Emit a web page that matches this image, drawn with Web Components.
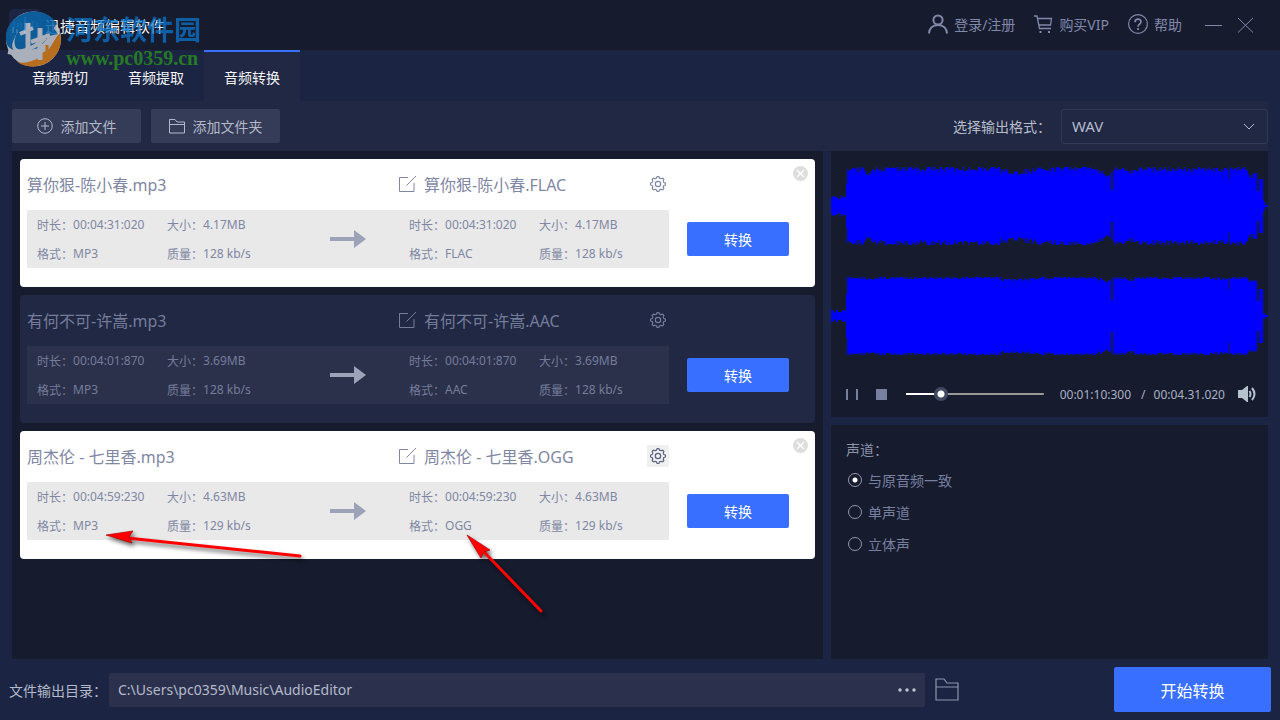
<!DOCTYPE html>
<html lang="zh-CN">
<head>
<meta charset="utf-8">
<meta name="viewport" content="width=device-width, initial-scale=1">
<title>迅捷音频编辑软件</title>
<style>
  html { background: #1b2442; }
  body { margin: 0; font-family: "Noto Sans", "Noto Sans CJK SC", sans-serif; font-size: 14px; color: #b4bacb; }
</style>
</head>
<body>
<audio-app></audio-app>
<script>
const BASE = `
  *, *::before, *::after { box-sizing: border-box; }
  button, input, select { font: inherit; color: inherit; margin: 0; }
  button { background: none; border: 0; padding: 0; cursor: pointer; display: inline-flex; align-items: center; justify-content: center; }
  svg { display: block; flex: none; }
  a { color: inherit; text-decoration: none; }
`;
function define(name, render, setup) {
  customElements.define(name, class extends HTMLElement {
    constructor() { super(); this.attachShadow({ mode: "open" }); }
    connectedCallback() {
      const t = document.createElement("template");
      t.innerHTML = `<style>${BASE}</style>` + render(this);
      this.shadowRoot.replaceChildren(t.content.cloneNode(true));
      if (setup) setup(this);
    }
  });
}

define("title-bar", () => `
  <style>
    :host { display: flex; align-items: center; height: 50px; padding: 0 26px 0 9px; background: #161b2e; color: #8189ab; white-space: nowrap; }
    h1 { margin: 0 auto 0 4px; font-size: 15px; font-weight: 400; color: #f4f5f8; }
    a { display: flex; align-items: center; gap: 6px; margin-right: 19px; height: 48px; margin-bottom: 2px; }
    .min { margin: 0 15px 0 4px; }
  </style>
  <svg width="32" height="32" viewBox="0 0 32 32"><rect width="32" height="32" rx="5" fill="#1c2644"/><path d="M5 12v7M9 14v4M12 13v6M20 13v6M24 12v7M28 14v4" stroke="#5792c4" stroke-width="1"/><path d="M16 8v17" stroke="#2f7cf5" stroke-width="2"/></svg>
  <h1>迅捷音频编辑软件</h1>
  <a href="#login"><svg width="20" height="20" viewBox="0 0 20 20" fill="none" stroke="currentColor" stroke-width="2"><circle cx="10" cy="6" r="4.6"/><path d="M1 19.500c0-5 3.500-8.500 9-8.500s9 3.500 9 8.500"/></svg>登录/注册</a>
  <a href="#vip"><svg width="19" height="20" viewBox="0 0 19 20" fill="none" stroke="currentColor" stroke-width="1.300"><path d="M0 2h3l2.500 12.500H17M4 4.500h13.500L16.500 11H5"/><path d="M5.500 18h2M14 18h2" stroke-width="2"/></svg>购买VIP</a>
  <a href="#help"><svg width="20" height="20" viewBox="0 0 20 20" fill="none" stroke="currentColor" stroke-width="1.200"><circle cx="10" cy="10" r="9.400"/><path d="M7 8.200c0-4 6-4 6-.4 0 2.400-3 2.300-3 5" stroke-width="1.700"/><path d="M10 14v2" stroke-width="1.800"/></svg>帮助</a>
  <button class="min" aria-label="最小化"><svg width="17" height="17"><path d="M0 8.500h17" stroke="#8189ab"/></svg></button>
  <button aria-label="关闭"><svg width="17" height="16" fill="none" stroke="#8189ab"><path d="M1 1l15 14.500M16 1L1 15.500"/></svg></button>
`);

define("tab-bar", () => `
  <style>
    :host { display: block; padding: 0 12px; }
    nav { display: flex; }
    a { width: 96px; height: 51px; padding-top: 1px; border-top: 2px solid transparent; display: flex; align-items: center; justify-content: center; color: #f4f5f8; }
    a[aria-current] { background: #212843; border-color: #386fff; }
  </style>
  <nav><a href="#cut">音频剪切</a><a href="#extract">音频提取</a><a href="#convert" aria-current="page">音频转换</a></nav>
`);

define("tool-bar", () => `
  <style>
    :host { display: flex; align-items: center; gap: 10px; height: 50px; margin: 0 12px; background: #212843; }
    button { width: 129px; height: 34px; background: #353c57; border-radius: 2px; gap: 8px; color: #b4b9ca; }
    label { margin-left: auto; color: #b8bdcb; }
    .pick { position: relative; width: 207px; }
    select { display: block; appearance: none; width: 100%; height: 35px; padding: 0 10px; border: 1px solid #303858; border-radius: 3px; background: #212843; color: #b4bbcf; font-size: 15px; }
    .pick svg { position: absolute; right: 13px; top: 14px; pointer-events: none; }
  </style>
  <button><svg width="16" height="16" viewBox="0 0 16 16" fill="none" stroke="currentColor"><circle cx="8" cy="8" r="7.300"/><path d="M4 8h8M8 4v8"/></svg>添加文件</button>
  <button><svg width="16" height="16" viewBox="0 0 16 16" fill="none" stroke="currentColor"><path d="M.5 15V1.500h5.500l2 2.500h7.500v11zM.5 6.500h15"/></svg>添加文件夹</button>
  <label for="fmt">选择输出格式：</label>
  <div class="pick"><select id="fmt"><option>WAV</option><option>MP3</option><option>FLAC</option></select>
  <svg width="12" height="7" fill="none" stroke="#b4bacb"><path d="M1 1l5 5 5-5"/></svg></div>
`);

const facts = (a, f) => `<dl>
  <div><dt>时长：</dt><dd>${a("time")}</dd></div><div><dt>大小：</dt><dd>${a("size")}</dd></div>
  <div><dt>格式：</dt><dd>${f}</dd></div><div><dt>质量：</dt><dd>${a("rate")} kb/s</dd></div></dl>`;

// Toothed ring of the settings icon: eight bumps round a circle.
const gear = (() => {
  let d = "";
  for (let i = 0; i <= 96; i++) {
    const t = i / 96 * Math.PI * 2, r = 6.7 + Math.tanh(Math.cos(8 * t) * 2) * 0.8;
    d += (i ? "L" : "M") + (8 + r * Math.sin(t)).toFixed(2) + " " + (8 - r * Math.cos(t)).toFixed(2);
  }
  return d + "Z";
})();

define("file-card", el => {
  const a = n => el.getAttribute(n), name = a("name"), to = a("to");
  return `
  <style>
    :host { position: relative; display: grid; grid-template-columns: minmax(0, 1fr) 102px; align-content: start; column-gap: 18px; height: 128px; padding: 0 26px 0 7px; border-radius: 4px; background: #fff; color: #7f87a3; --box: #e9e9e9; }
    :host([dim]) { background: #212843; color: #747c9b; --box: #2b314a; }
    .head { display: grid; grid-template-columns: 372fr 270fr; align-items: center; height: 49px; margin-bottom: 2px; font-size: 16px; white-space: nowrap; }
    .out { display: flex; align-items: center; gap: 7px; }
    h2 { margin: 0; font-size: 16px; font-weight: 400; }
    .gear { width: 22px; height: 22px; margin-left: auto; }
    :host([hot]) .gear { background: #f0f0f0; color: #596080; }
    .info { grid-row: 2; display: grid; grid-template-columns: 372fr 270fr; height: 58px; background: var(--box); font-size: 12px; }
    dl { margin: 0; padding-left: 10px; display: grid; grid-template-columns: 130px 1fr; grid-auto-rows: 29px; align-items: center; }
    dl div { display: flex; }
    dt, dd { margin: 0; white-space: nowrap; }
    .src { display: flex; justify-content: space-between; align-items: center; padding-right: 33px; }
    .go { grid-column: 2; grid-row: 2; height: 34px; margin-top: 12px; background: #386fff; color: #fff; border-radius: 2px; }
    .x { position: absolute; right: 7px; top: 7px; }
    :host([dim]) .x { display: none; }
  </style>
  <div class="head"><h2>${name}.mp3</h2><div class="out">
    <svg width="18" height="18" viewBox="0 0 18 18" fill="none" stroke="currentColor"><path d="M9 2.500H.5v14h14.500V8M7.500 10.500L17 1"/></svg>
    <h2>${name}.${to}</h2>
    <button class="gear" aria-label="设置"><svg width="16" height="16" viewBox="0 0 16 16" fill="none" stroke="currentColor" stroke-width="1.200"><path d="${gear}"/><circle cx="8" cy="8" r="2.700"/></svg></button></div></div>
  <div class="info">
    <div class="src">${facts(a, "MP3")}<svg width="36" height="18" viewBox="0 0 36 18"><path d="M0 7h24V0l12 9-12 9v-7H0z" fill="#9ca3b8"/></svg></div>
    ${facts(a, to)}
  </div>
  <button class="go">转换</button>
  <button class="x" aria-label="移除"><svg width="15" height="15" viewBox="0 0 15 15"><circle cx="7.500" cy="7.500" r="7.500" fill="#dedede"/><path d="M4 4l7 7M11 4l-7 7" stroke="#fff" stroke-width="1.200"/></svg></button>`;
});

// Envelope of the recording: [column, half height], held until the next entry.
const ENV = [[0, 8], [15, 22], [16, 37], [34, 34], [42, 37], [140, 38], [170, 34], [200, 36], [225, 38], [266, 34], [272, 31], [280, 16], [282, 37], [296, 34], [304, 37], [380, 36], [398, 27], [399, 37], [417, 31], [426, 15], [428, 27], [432, 5], [434, 1]];
function wave(seed, rough) {
  let d = "", s = seed, k = 0;
  for (let x = 0; x < 437; x++) {
    while (k + 1 < ENV.length && ENV[k + 1][0] <= x) k++;
    s = (s * 1103515245 + 12345) % 2147483648;
    const r = s / 2147483648 - .5, e = ENV[k][1];
    let h = e > 30 ? (rough ? e + r * 6 : 38 + (e - 37) / 2 + r * 3) : e > 10 ? e : e > 2 ? e + r * (rough ? 6 : 4) - (rough ? 0 : 3) : 1;
    h = Math.round(Math.min(39, Math.max(1, h)));
    d += `M${x} ${39 - h}h1v${2 * h}h-1z`;
  }
  return `<svg class="wave" viewBox="0 0 437 78" preserveAspectRatio="none" shape-rendering="crispEdges"><path d="${d}" fill="#00f"/></svg>`;
}

define("wave-player", () => `
  <style>
    :host { display: block; padding: 16px 0 1px; background: #161b2e; }
    .wave { width: 100%; height: 78px; }
    .wave + .wave { margin-top: 32px; }
    .bar { display: flex; align-items: center; height: 44px; margin-top: 17px; padding: 0 11px 0 15px; font-size: 12px; color: #aab0c2; white-space: nowrap; }
    .stop { margin: 0 19px 0 18px; }
    input { appearance: none; flex: 1; min-width: 60px; width: 100px; height: 14px; background: linear-gradient(90deg, #fff 25%, #999 25%) center / 100% 2px no-repeat; }
    input::-webkit-slider-thumb { appearance: none; width: 14px; height: 14px; border-radius: 50%; border: 0; background: radial-gradient(circle, #fff 3px, #414862 4px); }
    .now { margin-left: 16px; }
    .sep { margin: 0 8px 0 10px; }
    .vol { margin-left: 13px; }
  </style>
  ${wave(77, true)}${wave(4211, false)}
  <div class="bar">
    <button aria-label="暂停"><svg width="12" height="11" fill="#7880a0"><path d="M0 0h2v11H0zM10 0h2v11h-2z"/></svg></button>
    <button class="stop" aria-label="停止"><svg width="11" height="11"><rect width="11" height="11" fill="#7880a0"/></svg></button>
    <input type="range" aria-label="播放进度" min="0" max="1000" value="226">
    <span class="now">00:01:10:300</span><span class="sep">/</span><span>00:04.31.020</span>
    <button class="vol" aria-label="音量"><svg width="19" height="16" viewBox="0 0 19 16"><path d="M0 4h4l5-4h1v16H9l-5-4H0z" fill="#b4c3cd"/><path d="M11.500 5q2 3 0 6M14 2q5 6 0 12" fill="none" stroke="#b4c3cd" stroke-width="2"/></svg></button>
  </div>
`);

define("channel-options", () => `
  <style>
    :host { display: block; padding: 9px 15px; background: #161b2e; color: #7880a0; }
    .name { display: flex; align-items: center; height: 30px; color: #8b92a9; }
    label { display: flex; align-items: center; gap: 6px; height: 32px; padding-left: 2px; }
    input { appearance: none; width: 14px; height: 14px; border: 1px solid #9298ac; border-radius: 50%; }
    input:checked { background: radial-gradient(circle, #fff 2px, transparent 3px); }
  </style>
  <div role="radiogroup" aria-labelledby="n"><div class="name" id="n">声道：</div>
  <label><input type="radio" name="ch" checked>与原音频一致</label>
  <label><input type="radio" name="ch">单声道</label>
  <label><input type="radio" name="ch">立体声</label></div>
`);

define("output-bar", () => `
  <style>
    :host { display: grid; grid-template-columns: 100px minmax(0, 1fr) 189px 157px; align-items: center; height: 61px; padding: 0 9px; color: #b4bacb; white-space: nowrap; }
    .path { display: flex; align-items: center; height: 34px; padding: 0 9px; background: #2b314d; border-radius: 2px; }
    input { flex: 1; min-width: 0; border: 0; padding: 0; background: none; outline: 0; }
    .dir { justify-self: start; margin-left: 10px; }
    .start { height: 45px; background: #386fff; color: #fff; border-radius: 2px; font-size: 16px; }
  </style>
  <label for="p">文件输出目录：</label>
  <div class="path"><input id="p" type="text" value="C:\\Users\\pc0359\\Music\\AudioEditor"><button aria-label="浏览"><svg width="18" height="4" fill="#c0c5d3"><circle cx="2" cy="2" r="1.700"/><circle cx="9" cy="2" r="1.700"/><circle cx="16" cy="2" r="1.700"/></svg></button></div>
  <button class="dir" aria-label="打开目录"><svg width="24" height="23" viewBox="0 0 24 23" fill="none" stroke="#8e95ab" stroke-width="1.200"><path d="M1 22V1h8l3 4h11v17zM1 9h22"/></svg></button>
  <button class="start">开始转换</button>
`);

define("site-watermark", () => `
  <style>
    :host { position: absolute; left: 5px; top: 10px; display: flex; gap: 4px; pointer-events: none; white-space: nowrap; }
    b { display: block; font-weight: 700; }
    .cn { height: 36px; line-height: 38px; font-family: "Noto Sans CJK SC", sans-serif; font-size: 27px; color: #0a7bd4; opacity: .7; }
    .en { height: 24px; line-height: 24px; font-family: "Liberation Serif", serif; font-size: 20px; color: #267a26; }
  </style>
  <svg width="57" height="58" viewBox="0 0 57 58" opacity=".85">
    <circle cx="28.500" cy="29" r="27.500" fill="#c4c8d2"/>
    <path d="M1 29C-1 4 37-10 52 14L47 20C36 8 15 14 10 27c-3 6-4 10-1 13C3 38 1 34 1 29z" fill="#0b67ab"/>
    <path d="M11 25C17 12 33 7 47 16l6 8-9 2-9 11c-8 4-18 4-24 1-2-4-2-8 0-13z" fill="#0b67ab"/>
    <path d="M55 23c6 25-22 42-43 29 13 3 27-5 34-16 3-5 5-9 9-13z" fill="#d47b1a"/>
    <path d="M42 35v13M36 45l10-5" stroke="#d47b1a" stroke-width="3"/>
    <path d="M23 13v30M35 18v32" stroke="#c4c8d2" stroke-width="5"/>
    <path d="M15 24l13-6M26 32l19-7M3 42c9 2 25-2 37-14" stroke="#c4c8d2" stroke-width="4" fill="none"/>
    <path d="M8 17v6M12 19v4M20 13v8" stroke="#5ba0d4" stroke-width="1"/>
  </svg>
  <div><b class="cn">河东软件园</b><b class="en">www.pc0359.cn</b></div>
`);

define("callout-arrows", () => `
  <style>
    :host { position: absolute; left: 99px; top: 525px; pointer-events: none; filter: drop-shadow(2px 3px 2px rgba(0,0,0,.6)); }
  </style>
  <svg width="450" height="95" viewBox="0 0 450 95" fill="#f00" stroke="#f00">
    <path d="M28 13L201 31M386 28L442 86" stroke-width="3" stroke-linecap="round"/>
    <path d="M7 10L34 6 30 12 33 18z" stroke="#b00000" stroke-width=".7"/>
    <path d="M368 10L391 25 385 27 382 33z" stroke="#b00000" stroke-width=".7"/>
  </svg>
`);

define("audio-app", () => `
  <style>
    :host { position: relative; display: flex; flex-direction: column; min-height: 100vh; background: #1b2442; }
    main { flex: 1; display: grid; grid-template-columns: 811fr 437fr; gap: 8px; padding: 0 12px; }
    .list { display: flex; flex-direction: column; gap: 8px; padding: 8px; background: #161b2e; }
    .side { display: flex; flex-direction: column; gap: 8px; min-width: 0; }
    channel-options { flex: 1; }
  </style>
  <title-bar></title-bar>
  <tab-bar></tab-bar>
  <tool-bar></tool-bar>
  <main>
    <section class="list">
      <file-card name="算你狠-陈小春" to="FLAC" time="00:04:31:020" size="4.17MB" rate="128"></file-card>
      <file-card dim name="有何不可-许嵩" to="AAC" time="00:04:01:870" size="3.69MB" rate="128"></file-card>
      <file-card hot name="周杰伦 - 七里香" to="OGG" time="00:04:59:230" size="4.63MB" rate="129"></file-card>
    </section>
    <section class="side"><wave-player></wave-player><channel-options></channel-options></section>
  </main>
  <output-bar></output-bar>
  <site-watermark></site-watermark>
  <callout-arrows></callout-arrows>
`);
</script>
</body>
</html>
